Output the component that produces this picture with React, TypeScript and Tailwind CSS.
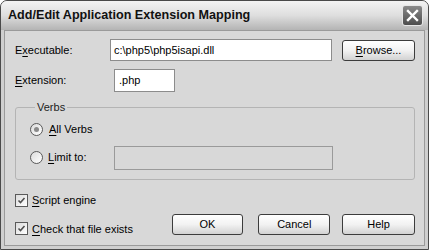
import React from "react";

function U({ children }: { children: React.ReactNode }) {
  return <span className="underline underline-offset-[2px]">{children}</span>;
}

function Button({ children, className = "" }: { children: React.ReactNode; className?: string }) {
  return (
    <button
      className={
        "h-[21px] rounded-[3px] border border-[#3c3c3c] bg-gradient-to-b from-[#ffffff] via-[#f2f2f2] to-[#d2d2d2] text-[11px] leading-none text-black " +
        className
      }
    >
      {children}
    </button>
  );
}

function Radio({ checked }: { checked?: boolean }) {
  return (
    <span className="flex h-[13px] w-[13px] items-center justify-center rounded-full border border-[#5a5a5a] bg-gradient-to-br from-[#dcdcdc] to-[#ffffff]">
      {checked && <span className="h-[5px] w-[5px] rounded-full bg-[#8a8a8a]" />}
    </span>
  );
}

function Check() {
  return (
    <span className="flex h-[13px] w-[13px] items-center justify-center border border-[#5a5a5a] bg-gradient-to-br from-[#dcdcdc] to-[#ffffff]">
      <svg width="9" height="9" viewBox="0 0 9 9">
        <path d="M1.5 4.5 L3.5 6.5 L7.5 2" fill="none" stroke="#505050" strokeWidth="1.6" />
      </svg>
    </span>
  );
}

export default function App() {
  return (
    <div
      className="flex h-[250px] w-[429px] flex-col overflow-hidden rounded-t-[7px] border border-[#4a4a4a] bg-[#cfcfcf] text-[11px] text-black"
      style={{ fontFamily: '"Liberation Sans", Arial, sans-serif' }}
    >
      {/* title bar */}
      <div className="flex h-[29px] shrink-0 items-center justify-between bg-gradient-to-b from-[#f4f4f4] via-[#dedede] to-[#b4b4b4] pl-[7px] pr-[5px]">
        <span className="text-[12.6px] font-bold text-[#111]">
          Add/Edit Application Extension Mapping
        </span>
        <span className="flex h-[21px] w-[21px] items-center justify-center rounded-[3px] border border-[#e6e6e6] bg-gradient-to-b from-[#8a8a8a] to-[#4e4e4e]">
          <svg width="13" height="13" viewBox="0 0 13 13">
            <path d="M2 2 L11 11 M11 2 L2 11" stroke="#ffffff" strokeWidth="2.4" strokeLinecap="square" />
          </svg>
        </span>
      </div>

      {/* body */}
      <div className="mx-[3px] mb-[3px] flex flex-1 flex-col border border-[#9a9a9a] bg-[#d8d8d8] pl-[10px] pr-[9px]">
        <div className="mt-[8px] flex h-[22px] items-center">
          <span className="w-[95px]">
            E<U>x</U>ecutable:
          </span>
          <div className="flex h-[22px] w-[222px] items-center border border-[#8c8c8c] bg-white pl-[3px]">
            c:\php5\php5isapi.dll
          </div>
          <Button className="ml-[10px] w-[73px]">
            <U>B</U>rowse...
          </Button>
        </div>

        <div className="mt-[8px] flex h-[23px] items-center">
          <span className="w-[99px]">
            <U>E</U>xtension:
          </span>
          <div className="flex h-[23px] w-[61px] items-center border border-[#8c8c8c] bg-white pl-[4px]">
            .php
          </div>
        </div>

        <fieldset className="mt-[9px] h-[79px] w-[400px] rounded-[3px] border border-[#b4b4b4] pl-[14px]">
          <legend className="ml-[5px] px-[2px] leading-[13px] text-[#222]">Verbs</legend>
          <div className="mt-[7px] flex items-center gap-[6px]">
            <Radio checked />
            <span>
              <U>A</U>ll Verbs
            </span>
          </div>
          <div className="mt-[8px] flex items-center">
            <Radio />
            <span className="ml-[5px] w-[66px]">
              <U>L</U>imit to:
            </span>
            <div className="h-[24px] w-[219px] border border-[#9a9a9a] bg-[#d8d8d8]" />
          </div>
        </fieldset>

        <div className="mt-[12px] flex items-center gap-[4px]">
          <Check />
          <span>
            <U>S</U>cript engine
          </span>
        </div>
        <div className="mt-[5px] flex items-start">
          <div className="mt-[7px] flex w-[157px] items-center gap-[4px]">
            <Check />
            <span>
              <U>C</U>heck that file exists
            </span>
          </div>
          <Button className="w-[72px]">OK</Button>
          <Button className="ml-[15px] w-[72px]">Cancel</Button>
          <Button className="ml-[12px] w-[73px]">Help</Button>
        </div>
      </div>
    </div>
  );
}
